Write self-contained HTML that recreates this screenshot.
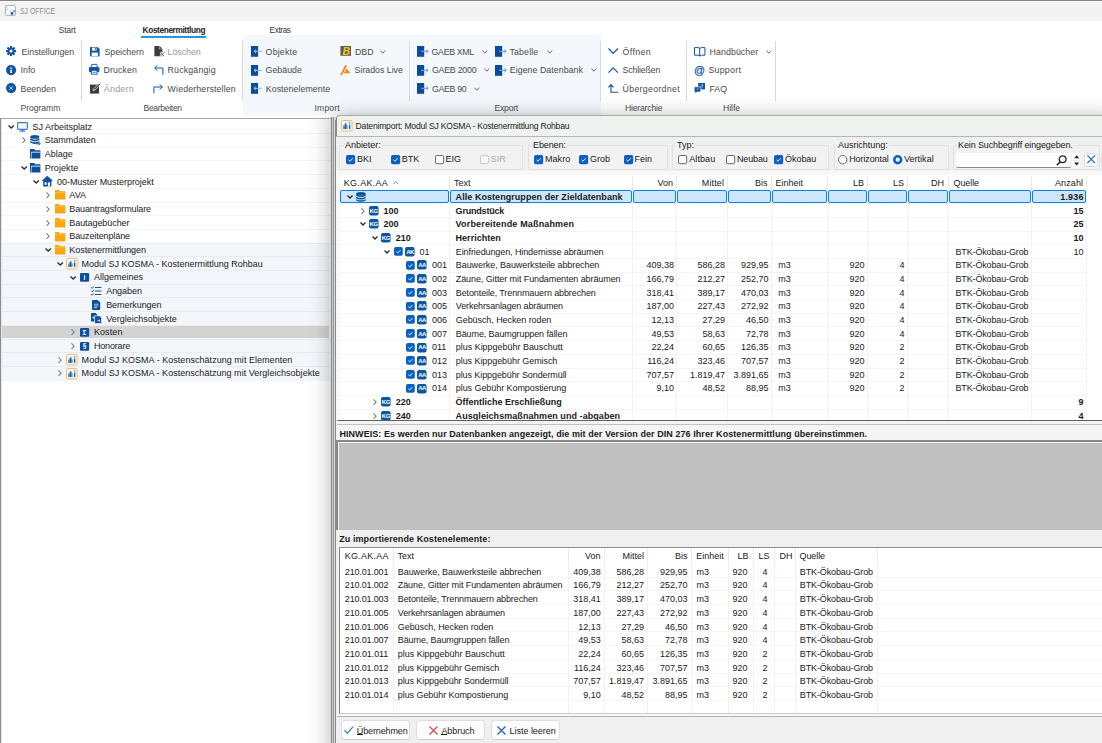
<!DOCTYPE html>
<html lang="de"><head><meta charset="utf-8"><title>SJ OFFICE</title>
<style>
html,body{margin:0;padding:0;background:#fff;}
body{width:1102px;height:743px;overflow:hidden;position:relative;font-family:"Liberation Sans",Arial,sans-serif;font-size:9px;color:#1a1a1a;}
#app{position:absolute;left:0;top:0;width:1102px;height:743px;overflow:hidden;}
#app div,#app span,#app svg{position:absolute;}
#app span{white-space:pre;line-height:12px;}
#app svg{overflow:visible;}
.rb{color:#4a4a4a;font-size:8.8px;}
.gl{color:#4c4c4c;font-size:8.6px;}
</style></head>
<body><div id="app">
<div style="left:0px;top:0px;width:1102px;height:20.8px;background:#f3f3f3;"></div>
<div style="left:0px;top:0px;width:1102px;height:1px;background:#868686;"></div>
<div style="left:0px;top:1px;width:1102px;height:1px;background:#f9f9f9;"></div>
<svg style="left:5px;top:5px;" width="11" height="11" viewBox="0 0 11 11"><rect x="0.5" y="0.5" width="10" height="10" rx="1.4" fill="#fff" stroke="#86b0e0" stroke-width="0.9"/><path d="M0.6 1 L1.6 2.4 L2.6 3.6" stroke="#f0b040" stroke-width="1" fill="none"/><rect x="0.2" y="0.2" width="1.6" height="1.4" fill="#f6c86a"/><rect x="5.9" y="7.2" width="2.4" height="2.4" fill="#174a9c"/><rect x="8.4" y="5.4" width="1.6" height="1.5" fill="#2f66b4"/><path d="M5 7 L6.4 5.6 L8 5.2 M5.4 9.8 L5.6 8" stroke="#f0b850" stroke-width="0.8" fill="none"/><path d="M0.8 5.2 L2.6 4.2" stroke="#86b0e0" stroke-width="0.7"/></svg>
<span id="t1" style="top:5.00px;left:19.8px;font-size:8.8px;color:#8b8b8b;transform:scaleX(0.78);transform-origin:0 50%;">SJ OFFICE</span>
<span id="t2" style="top:24.50px;left:58.8px;font-size:8.2px;color:#333;letter-spacing:-0.059px;">Start</span>
<span id="t3" style="top:24.00px;left:142.6px;font-size:8.3px;font-weight:bold;color:#222;letter-spacing:-0.387px;">Kostenermittlung</span>
<span id="t4" style="top:24.50px;left:269.6px;font-size:8.2px;color:#333;letter-spacing:-0.370px;">Extras</span>
<div style="left:141px;top:36px;width:65px;height:2px;background:#1b9ae0;"></div>
<div style="left:243px;top:35px;width:358px;height:81px;background:#f4f7fb;"></div>
<div style="left:81px;top:41px;width:1px;height:60px;background:#d9d9d9;"></div>
<div style="left:242px;top:41px;width:1px;height:60px;background:#d9d9d9;"></div>
<div style="left:409px;top:41px;width:1px;height:60px;background:#d9d9d9;"></div>
<div style="left:600px;top:41px;width:1px;height:60px;background:#d9d9d9;"></div>
<div style="left:686px;top:41px;width:1px;height:60px;background:#d9d9d9;"></div>
<div style="left:775px;top:41px;width:1px;height:60px;background:#d9d9d9;"></div>
<svg style="left:5.8px;top:46.2px;" width="10.1" height="10.1" viewBox="0 0 10.1 10.1"><g fill="#0f55a0"><rect x="3.95" y="0" width="2.2" height="10.1" rx="0.3" transform="rotate(0 5.05 5.05)"/><rect x="3.95" y="0" width="2.2" height="10.1" rx="0.3" transform="rotate(45 5.05 5.05)"/><rect x="3.95" y="0" width="2.2" height="10.1" rx="0.3" transform="rotate(90 5.05 5.05)"/><rect x="3.95" y="0" width="2.2" height="10.1" rx="0.3" transform="rotate(135 5.05 5.05)"/><circle cx="5.05" cy="5.05" r="3.35"/></g><circle cx="5.05" cy="5.05" r="1.55" fill="#fff"/></svg>
<span id="t5" class="rb" style="top:46.00px;left:21.5px;letter-spacing:-0.025px;">Einstellungen</span>
<svg style="left:5.7px;top:64.8px;" width="10.2" height="10.2" viewBox="0 0 10.2 10.2"><circle cx="5.1" cy="5.1" r="5.1" fill="#0f55a0"/><rect x="4.4" y="4.6" width="1.4" height="3.1" fill="#fff"/><rect x="4" y="7.3" width="2.2" height="0.7" fill="#fff"/><circle cx="5.1" cy="3.1" r="0.85" fill="#fff"/></svg>
<span id="t6" class="rb" style="top:64.00px;left:20.6px;">Info</span>
<svg style="left:5.7px;top:83.2px;" width="10.2" height="10.2" viewBox="0 0 10.2 10.2"><circle cx="5.1" cy="5.1" r="5.1" fill="#0f55a0"/><path d="M3.3 3.3 L6.9 6.9 M6.9 3.3 L3.3 6.9" stroke="#e8f0fa" stroke-width="0.75"/></svg>
<span id="t7" class="rb" style="top:83.00px;left:20.6px;letter-spacing:0.009px;">Beenden</span>
<span id="t8" class="gl" style="top:102.00px;left:20.6px;letter-spacing:-0.053px;">Programm</span>
<svg style="left:89.8px;top:46.6px;" width="9.6" height="9.4" viewBox="0 0 9.6 9.4"><path d="M0.8 0 H7.4 L9.6 2.1 V8.6 Q9.6 9.4 8.8 9.4 H0.8 Q0 9.4 0 8.6 V0.8 Q0 0 0.8 0 Z" fill="#0f55a0"/><rect x="2" y="0.6" width="4.6" height="3" fill="#fff"/><rect x="5.2" y="1" width="1" height="2" fill="#0f55a0"/><rect x="1.7" y="5.6" width="6.2" height="3.8" fill="#fff"/></svg>
<span id="t9" class="rb" style="top:46.00px;left:104.5px;letter-spacing:-0.036px;">Speichern</span>
<svg style="left:89.4px;top:64.3px;" width="10.4" height="10.6" viewBox="0 0 10.4 10.6"><rect x="2.3" y="0.4" width="5.8" height="3.2" rx="0.5" fill="#fff" stroke="#0f55a0" stroke-width="0.9"/><rect x="0" y="3" width="10.4" height="5.2" rx="1.3" fill="#0f55a0"/><rect x="2.4" y="6.3" width="5.6" height="3.9" fill="#fff" stroke="#0f55a0" stroke-width="0.9"/><rect x="3.6" y="7.8" width="3.2" height="0.8" fill="#0f55a0"/></svg>
<span id="t10" class="rb" style="top:64.00px;left:103.6px;letter-spacing:0.076px;">Drucken</span>
<svg style="left:89.6px;top:82.8px;" width="10.6" height="10.6" viewBox="0 0 10.6 10.6"><rect x="0" y="1.6" width="9" height="9" fill="#3c3c3c"/><path d="M3 7.6 L3.5 5.9 L9.2 0.3 L10.4 1.5 L4.8 7.1 Z" fill="#3c3c3c" stroke="#fff" stroke-width="0.7"/></svg>
<span id="t11" style="top:83.00px;left:103.8px;color:#9a9a9a;letter-spacing:0.178px;">Ändern</span>
<svg style="left:153.5px;top:46.1px;" width="10.6" height="10.6" viewBox="0 0 10.6 10.6"><path d="M0.4 0 H5.6 L8.4 2.8 V10.2 H0.4 Z" fill="#3c3c3c"/><path d="M5.4 0.2 V3 H8.2" fill="none" stroke="#fff" stroke-width="0.5"/><path d="M6.3 6.3 L10.2 10.3 M10.2 6.3 L6.3 10.3" stroke="#fff" stroke-width="2"/><path d="M6.4 6.4 L10.2 10.2 M10.2 6.4 L6.4 10.2" stroke="#3c3c3c" stroke-width="0.8"/></svg>
<span id="t12" style="top:46.00px;left:167.6px;color:#9a9a9a;letter-spacing:-0.133px;">Löschen</span>
<svg style="left:153.6px;top:65px;" width="9.6" height="10" viewBox="0 0 9.6 10"><path d="M3.4 0.4 L0.6 3 L3.4 5.6 M0.8 3 H8.9 V9.8" fill="none" stroke="#0f55a0" stroke-width="1"/></svg>
<span id="t13" class="rb" style="top:64.00px;left:167.6px;letter-spacing:0.163px;">Rückgängig</span>
<svg style="left:153.4px;top:84px;" width="10" height="9.4" viewBox="0 0 10 9.4"><path d="M6.6 0.4 L9.4 3 L6.6 5.6 M9.2 3 H0.9 V9.2" fill="none" stroke="#0f55a0" stroke-width="1"/></svg>
<span id="t14" class="rb" style="top:83.00px;left:167.6px;letter-spacing:0.143px;">Wiederherstellen</span>
<span id="t15" class="gl" style="top:102.00px;left:143.5px;letter-spacing:-0.328px;">Bearbeiten</span>
<svg style="left:251px;top:46.1px;" width="11" height="10.8" viewBox="0 0 11 10.8"><rect x="0" y="0" width="7.1" height="10.8" fill="#0a4b9b"/><path d="M7.1 5.3 H10.8" stroke="#6f9dd3" stroke-width="0.8"/><path d="M3.2 5.3 H7.1 M4.9 3.6 L3.1 5.3 L4.9 7" stroke="#dbe7f5" stroke-width="0.8" fill="none"/></svg>
<span id="t16" class="rb" style="top:46.00px;left:265.6px;letter-spacing:0.196px;">Objekte</span>
<svg style="left:251px;top:64.5px;" width="11" height="10.8" viewBox="0 0 11 10.8"><rect x="0" y="0" width="7.1" height="10.8" fill="#0a4b9b"/><path d="M7.1 5.3 H10.8" stroke="#6f9dd3" stroke-width="0.8"/><path d="M3.2 5.3 H7.1 M4.9 3.6 L3.1 5.3 L4.9 7" stroke="#dbe7f5" stroke-width="0.8" fill="none"/></svg>
<span id="t17" class="rb" style="top:64.00px;left:265.6px;letter-spacing:0.014px;">Gebäude</span>
<svg style="left:251px;top:83.2px;" width="11" height="10.8" viewBox="0 0 11 10.8"><rect x="0" y="0" width="7.1" height="10.8" fill="#0a4b9b"/><path d="M7.1 5.3 H10.8" stroke="#6f9dd3" stroke-width="0.8"/><path d="M3.2 5.3 H7.1 M4.9 3.6 L3.1 5.3 L4.9 7" stroke="#dbe7f5" stroke-width="0.8" fill="none"/></svg>
<span id="t18" class="rb" style="top:83.00px;left:265.8px;letter-spacing:0.052px;">Kostenelemente</span>
<svg style="left:339.8px;top:46.2px;" width="11.4" height="10.4" viewBox="0 0 11.4 10.4"><rect x="0.4" y="0" width="10.6" height="9.8" fill="#5b5b5b"/></svg>
<span id="t19" style="top:45.00px;left:246.2px;width:200px;text-align:center;font-size:10.5px;font-weight:bold;color:#f7c815;font-style:italic;">B</span>
<span id="t20" class="rb" style="top:46.00px;left:355px;">DBD</span>
<svg style="left:380.3px;top:50.0px;" width="5.5" height="4" viewBox="0 0 5.5 4"><path d="M0.4 0.6 L2.75 3.2 L5.1 0.6" fill="none" stroke="#555" stroke-width="0.9"/></svg>
<svg style="left:340px;top:64.8px;" width="10.6" height="10" viewBox="0 0 10.6 10"><path d="M5.2 0 L7.2 0.8 L2 10 H0 Z" fill="#f28a1c"/><path d="M6.8 3.4 L10.5 8.2 H3.6 Z" fill="#f28a1c"/></svg>
<span id="t21" class="rb" style="top:64.00px;left:354.6px;letter-spacing:-0.010px;">Sirados Live</span>
<span id="t22" class="gl" style="top:102.00px;left:314.6px;letter-spacing:0.123px;">Import</span>
<svg style="left:417px;top:46.1px;" width="12" height="10.8" viewBox="0 0 12 10.8"><rect x="0" y="0" width="7.2" height="10.8" fill="#0a4b9b"/><path d="M7.2 5.3 H11 M9.4 3.6 L11.2 5.3 L9.4 7" stroke="#3f7cc6" stroke-width="0.8" fill="none"/><path d="M4 5.3 H7.2" stroke="#a9c4e6" stroke-width="0.8"/></svg>
<span id="t23" class="rb" style="top:46.00px;left:431.6px;letter-spacing:-0.336px;">GAEB XML</span>
<svg style="left:481.7px;top:50.0px;" width="5.5" height="4" viewBox="0 0 5.5 4"><path d="M0.4 0.6 L2.75 3.2 L5.1 0.6" fill="none" stroke="#555" stroke-width="0.9"/></svg>
<svg style="left:417px;top:64.5px;" width="12" height="10.8" viewBox="0 0 12 10.8"><rect x="0" y="0" width="7.2" height="10.8" fill="#0a4b9b"/><path d="M7.2 5.3 H11 M9.4 3.6 L11.2 5.3 L9.4 7" stroke="#3f7cc6" stroke-width="0.8" fill="none"/><path d="M4 5.3 H7.2" stroke="#a9c4e6" stroke-width="0.8"/></svg>
<span id="t24" class="rb" style="top:64.00px;left:432px;letter-spacing:-0.241px;">GAEB 2000</span>
<svg style="left:484.1px;top:68.4px;" width="5.5" height="4" viewBox="0 0 5.5 4"><path d="M0.4 0.6 L2.75 3.2 L5.1 0.6" fill="none" stroke="#555" stroke-width="0.9"/></svg>
<svg style="left:417px;top:83.2px;" width="12" height="10.8" viewBox="0 0 12 10.8"><rect x="0" y="0" width="7.2" height="10.8" fill="#0a4b9b"/><path d="M7.2 5.3 H11 M9.4 3.6 L11.2 5.3 L9.4 7" stroke="#3f7cc6" stroke-width="0.8" fill="none"/><path d="M4 5.3 H7.2" stroke="#a9c4e6" stroke-width="0.8"/></svg>
<span id="t25" class="rb" style="top:83.00px;left:432px;letter-spacing:-0.341px;">GAEB 90</span>
<svg style="left:474.1px;top:87.10000000000001px;" width="5.5" height="4" viewBox="0 0 5.5 4"><path d="M0.4 0.6 L2.75 3.2 L5.1 0.6" fill="none" stroke="#555" stroke-width="0.9"/></svg>
<svg style="left:495px;top:46.1px;" width="12" height="10.8" viewBox="0 0 12 10.8"><rect x="0" y="0" width="7.2" height="10.8" fill="#0a4b9b"/><path d="M7.2 5.3 H11 M9.4 3.6 L11.2 5.3 L9.4 7" stroke="#3f7cc6" stroke-width="0.8" fill="none"/><path d="M4 5.3 H7.2" stroke="#a9c4e6" stroke-width="0.8"/></svg>
<span id="t26" class="rb" style="top:46.00px;left:509.6px;letter-spacing:0.116px;">Tabelle</span>
<svg style="left:546.7px;top:50.0px;" width="5.5" height="4" viewBox="0 0 5.5 4"><path d="M0.4 0.6 L2.75 3.2 L5.1 0.6" fill="none" stroke="#555" stroke-width="0.9"/></svg>
<svg style="left:495px;top:64.5px;" width="12" height="10.8" viewBox="0 0 12 10.8"><rect x="0" y="0" width="7.2" height="10.8" fill="#0a4b9b"/><path d="M7.2 5.3 H11 M9.4 3.6 L11.2 5.3 L9.4 7" stroke="#3f7cc6" stroke-width="0.8" fill="none"/><path d="M4 5.3 H7.2" stroke="#a9c4e6" stroke-width="0.8"/></svg>
<span id="t27" class="rb" style="top:64.00px;left:509.8px;letter-spacing:0.044px;">Eigene Datenbank</span>
<svg style="left:591.3px;top:68.4px;" width="5.5" height="4" viewBox="0 0 5.5 4"><path d="M0.4 0.6 L2.75 3.2 L5.1 0.6" fill="none" stroke="#555" stroke-width="0.9"/></svg>
<span id="t28" class="gl" style="top:102.00px;left:494.6px;letter-spacing:-0.257px;">Export</span>
<svg style="left:608.2px;top:48.4px;" width="10.4" height="6.2" viewBox="0 0 10.4 6.2"><path d="M0.5 0.5 L5.2 5.4 L9.9 0.5" fill="none" stroke="#0f55a0" stroke-width="1.2"/></svg>
<span id="t29" class="rb" style="top:46.00px;left:622.6px;letter-spacing:0.342px;">Öffnen</span>
<svg style="left:608.2px;top:66.9px;" width="10.4" height="6.2" viewBox="0 0 10.4 6.2"><path d="M0.5 5.7 L5.2 0.8 L9.9 5.7" fill="none" stroke="#0f55a0" stroke-width="1.2"/></svg>
<span id="t30" class="rb" style="top:64.00px;left:622.6px;letter-spacing:-0.158px;">Schließen</span>
<svg style="left:608px;top:83.9px;" width="10.4" height="9" viewBox="0 0 10.4 9"><path d="M0.5 3.3 L3 0.7 L5.5 3.3 M3 0.8 V8.3 H10.2" fill="none" stroke="#0f55a0" stroke-width="1.15"/></svg>
<span id="t31" class="rb" style="top:83.00px;left:622.6px;letter-spacing:0.292px;">Übergeordnet</span>
<span id="t32" class="gl" style="top:102.00px;left:625px;letter-spacing:-0.187px;">Hierarchie</span>
<svg style="left:694px;top:47px;" width="11.4" height="9.6" viewBox="0 0 11.4 9.6"><path d="M0.5 0.6 H4 Q5.7 0.6 5.7 2 Q5.7 0.6 7.4 0.6 H10.9 V8.2 H7.4 Q5.7 8.2 5.7 9.3 Q5.7 8.2 4 8.2 H0.5 Z M5.7 2 V9" fill="none" stroke="#0f55a0" stroke-width="1"/></svg>
<span id="t33" class="rb" style="top:46.00px;left:709.6px;letter-spacing:0.076px;">Handbücher</span>
<svg style="left:766.1px;top:50.0px;" width="5.5" height="4" viewBox="0 0 5.5 4"><path d="M0.4 0.6 L2.75 3.2 L5.1 0.6" fill="none" stroke="#555" stroke-width="0.9"/></svg>
<span id="t34" style="top:64.00px;left:599.5px;width:200px;text-align:center;font-size:10.8px;color:#0f55a0;-webkit-text-stroke:0.25px #0f55a0;">@</span>
<span id="t35" class="rb" style="top:64.00px;left:708.4px;letter-spacing:0.270px;">Support</span>
<svg style="left:694.2px;top:83.1px;" width="11.4" height="10.8" viewBox="0 0 11.4 10.8"><path d="M4.2 0 H11 V6.4 H4.2 Z" fill="#0f55a0"/><path d="M0.2 3.8 H6.8 V9 H3 L1.2 10.8 V9 H0.2 Z" fill="#0f55a0" stroke="#fff" stroke-width="0.6"/><rect x="7.7" y="1.1" width="1" height="1.7" fill="#fff"/><rect x="7.7" y="3.4" width="1" height="0.9" fill="#fff"/><rect x="2.8" y="5.6" width="1.6" height="1" fill="#fff" opacity="0.7"/></svg>
<span id="t36" class="rb" style="top:83.00px;left:709.4px;">FAQ</span>
<span id="t37" class="gl" style="top:102.00px;left:723px;letter-spacing:-0.021px;">Hilfe</span>
<div style="left:0px;top:118px;width:331px;height:1px;background:#a6a6a6;"></div>
<div style="left:0px;top:118px;width:1px;height:625px;background:#8f8f8f;"></div>
<div style="left:1px;top:119px;width:1px;height:624px;background:#e3e3e3;"></div>
<div style="left:2px;top:243.14999999999998px;width:328px;height:137.0px;background:#f3f6fa;"></div>
<div style="left:2px;top:325.95000000000005px;width:326.5px;height:12.5px;background:#d3d3d3;"></div>
<div style="left:2px;top:133.05px;width:328px;height:1px;background:rgba(120,130,140,0.085);"></div>
<div style="left:2px;top:146.75px;width:328px;height:1px;background:rgba(120,130,140,0.085);"></div>
<div style="left:2px;top:160.45px;width:328px;height:1px;background:rgba(120,130,140,0.085);"></div>
<div style="left:2px;top:174.15px;width:328px;height:1px;background:rgba(120,130,140,0.085);"></div>
<div style="left:2px;top:187.85px;width:328px;height:1px;background:rgba(120,130,140,0.085);"></div>
<div style="left:2px;top:201.55px;width:328px;height:1px;background:rgba(120,130,140,0.085);"></div>
<div style="left:2px;top:215.25px;width:328px;height:1px;background:rgba(120,130,140,0.085);"></div>
<div style="left:2px;top:228.95px;width:328px;height:1px;background:rgba(120,130,140,0.085);"></div>
<div style="left:2px;top:242.65px;width:328px;height:1px;background:rgba(120,130,140,0.085);"></div>
<div style="left:2px;top:256.35px;width:328px;height:1px;background:rgba(120,130,140,0.085);"></div>
<div style="left:2px;top:270.05px;width:328px;height:1px;background:rgba(120,130,140,0.085);"></div>
<div style="left:2px;top:283.75px;width:328px;height:1px;background:rgba(120,130,140,0.085);"></div>
<div style="left:2px;top:297.45px;width:328px;height:1px;background:rgba(120,130,140,0.085);"></div>
<div style="left:2px;top:311.15px;width:328px;height:1px;background:rgba(120,130,140,0.085);"></div>
<div style="left:2px;top:324.85px;width:328px;height:1px;background:rgba(120,130,140,0.085);"></div>
<div style="left:2px;top:338.55px;width:328px;height:1px;background:rgba(120,130,140,0.085);"></div>
<div style="left:2px;top:352.25px;width:328px;height:1px;background:rgba(120,130,140,0.085);"></div>
<div style="left:2px;top:365.95px;width:328px;height:1px;background:rgba(120,130,140,0.085);"></div>
<div style="left:2px;top:379.65px;width:328px;height:1px;background:rgba(120,130,140,0.085);"></div>
<svg style="left:8.200000000000001px;top:124.89999999999999px;" width="6.4" height="4" viewBox="0 0 6.4 4"><path d="M0.5 0.5 L3.2 3.1 L5.9 0.5" fill="none" stroke="#2e2e2e" stroke-width="1.35"/></svg>
<svg style="left:17.200000000000003px;top:121.69999999999999px;" width="11" height="10" viewBox="0 0 11 10"><rect x="0.6" y="0.6" width="9.8" height="6.8" rx="0.9" fill="#f3f8ff" stroke="#3a78cc" stroke-width="1.1"/><rect x="4.2" y="7.6" width="2.6" height="1.1" fill="#3a78cc"/><rect x="2.6" y="8.6" width="5.8" height="1.1" fill="#3a78cc"/></svg>
<span id="t38" style="top:121.00px;left:32.4px;letter-spacing:0.011px;">SJ Arbeitsplatz</span>
<svg style="left:21.500000000000004px;top:137.39999999999998px;" width="4" height="6.4" viewBox="0 0 4 6.4"><path d="M0.5 0.4 L3.1 3.2 L0.5 6" fill="none" stroke="#7a7a7a" stroke-width="1.05"/></svg>
<svg style="left:29.900000000000002px;top:135.2px;" width="10" height="10.4" viewBox="0 0 10 10.4"><g fill="#0c4f9b"><ellipse cx="4.8" cy="1.9" rx="4.6" ry="1.9"/><path d="M0.2 3.3 Q4.8 6.2 9.4 3.3 V5 Q4.8 7.9 0.2 5 Z"/><path d="M0.2 5.9 Q4.8 8.8 9.4 5.9 V7.6 Q4.8 10.5 0.2 7.6 Z"/></g></svg>
<svg style="left:35.900000000000006px;top:142.2px;" width="4.4" height="3.6" viewBox="0 0 4.4 3.6"><path d="M0 1.8 H4.2 M2.6 0.2 L4.2 1.8 L2.6 3.4" stroke="#0c4f9b" stroke-width="0.9" fill="none"/></svg>
<span id="t39" style="top:134.00px;left:44.7px;letter-spacing:0.017px;">Stammdaten</span>
<svg style="left:29.900000000000002px;top:149.4px;" width="10.4" height="9.4" viewBox="0 0 10.4 9.4"><path d="M0 0 H4.2 L5.2 1.3 H10.4 V9.4 H0 Z" fill="#0c4f9b"/><path d="M1.2 3.2 H10.4" stroke="#fff" stroke-width="0.8"/><path d="M1.4 3.2 V9.4" stroke="#fff" stroke-width="0.6"/></svg>
<span id="t40" style="top:148.00px;left:44.7px;letter-spacing:0.028px;">Ablage</span>
<svg style="left:20.500000000000004px;top:165.99999999999997px;" width="6.4" height="4" viewBox="0 0 6.4 4"><path d="M0.5 0.5 L3.2 3.1 L5.9 0.5" fill="none" stroke="#2e2e2e" stroke-width="1.35"/></svg>
<svg style="left:29.900000000000002px;top:163.1px;" width="10.4" height="9.4" viewBox="0 0 10.4 9.4"><path d="M0 0 H4.2 L5.2 1.3 H10.4 V9.4 H0 Z" fill="#0c4f9b"/><path d="M1.2 3.2 H10.4" stroke="#fff" stroke-width="0.8"/><path d="M1.4 3.2 V9.4" stroke="#fff" stroke-width="0.6"/></svg>
<span id="t41" style="top:162.00px;left:44.7px;letter-spacing:0.084px;">Projekte</span>
<svg style="left:32.8px;top:179.69999999999996px;" width="6.4" height="4" viewBox="0 0 6.4 4"><path d="M0.5 0.5 L3.2 3.1 L5.9 0.5" fill="none" stroke="#2e2e2e" stroke-width="1.35"/></svg>
<svg style="left:42.0px;top:176.29999999999998px;" width="10.6" height="10.4" viewBox="0 0 10.6 10.4"><path d="M5.3 0 L10.6 4.6 H9.4 V10.4 H1.2 V4.6 H0 Z" fill="#0c4f9b"/><path d="M0.2 4.9 L5.3 0.6 L10.4 4.9" stroke="#fff" stroke-width="0.7" fill="none"/><path d="M5.3 0 L10.6 4.4 L9.9 5.2 L5.3 1.3 L0.7 5.2 L0 4.4 Z" fill="#0c4f9b"/><rect x="2.6" y="6.4" width="2.1" height="2.4" fill="#fff"/><rect x="5.9" y="6.4" width="2.1" height="4" fill="#fff"/></svg>
<span id="t42" style="top:176.00px;left:57.0px;letter-spacing:-0.037px;">00-Muster Musterprojekt</span>
<svg style="left:46.1px;top:192.2px;" width="4" height="6.4" viewBox="0 0 4 6.4"><path d="M0.5 0.4 L3.1 3.2 L0.5 6" fill="none" stroke="#7a7a7a" stroke-width="1.05"/></svg>
<svg style="left:54.50000000000001px;top:190.4px;" width="10.4" height="9.6" viewBox="0 0 10.4 9.6"><path d="M0 0.6 Q0 0 0.6 0 H4 L5 1.2 H9.8 Q10.4 1.2 10.4 1.8 V9 Q10.4 9.6 9.8 9.6 H0.6 Q0 9.6 0 9 Z" fill="#f9a70d"/><path d="M0 2.6 H10.4" stroke="#fdc75a" stroke-width="0.7"/></svg>
<span id="t43" style="top:189.00px;left:69.30000000000001px;">AVA</span>
<svg style="left:46.1px;top:205.89999999999998px;" width="4" height="6.4" viewBox="0 0 4 6.4"><path d="M0.5 0.4 L3.1 3.2 L0.5 6" fill="none" stroke="#7a7a7a" stroke-width="1.05"/></svg>
<svg style="left:54.50000000000001px;top:204.1px;" width="10.4" height="9.6" viewBox="0 0 10.4 9.6"><path d="M0 0.6 Q0 0 0.6 0 H4 L5 1.2 H9.8 Q10.4 1.2 10.4 1.8 V9 Q10.4 9.6 9.8 9.6 H0.6 Q0 9.6 0 9 Z" fill="#f9a70d"/><path d="M0 2.6 H10.4" stroke="#fdc75a" stroke-width="0.7"/></svg>
<span id="t44" style="top:203.00px;left:69.30000000000001px;letter-spacing:-0.124px;">Bauantragsformulare</span>
<svg style="left:46.1px;top:219.6px;" width="4" height="6.4" viewBox="0 0 4 6.4"><path d="M0.5 0.4 L3.1 3.2 L0.5 6" fill="none" stroke="#7a7a7a" stroke-width="1.05"/></svg>
<svg style="left:54.50000000000001px;top:217.8px;" width="10.4" height="9.6" viewBox="0 0 10.4 9.6"><path d="M0 0.6 Q0 0 0.6 0 H4 L5 1.2 H9.8 Q10.4 1.2 10.4 1.8 V9 Q10.4 9.6 9.8 9.6 H0.6 Q0 9.6 0 9 Z" fill="#f9a70d"/><path d="M0 2.6 H10.4" stroke="#fdc75a" stroke-width="0.7"/></svg>
<span id="t45" style="top:217.00px;left:69.30000000000001px;letter-spacing:-0.066px;">Bautagebücher</span>
<svg style="left:46.1px;top:233.29999999999998px;" width="4" height="6.4" viewBox="0 0 4 6.4"><path d="M0.5 0.4 L3.1 3.2 L0.5 6" fill="none" stroke="#7a7a7a" stroke-width="1.05"/></svg>
<svg style="left:54.50000000000001px;top:231.5px;" width="10.4" height="9.6" viewBox="0 0 10.4 9.6"><path d="M0 0.6 Q0 0 0.6 0 H4 L5 1.2 H9.8 Q10.4 1.2 10.4 1.8 V9 Q10.4 9.6 9.8 9.6 H0.6 Q0 9.6 0 9 Z" fill="#f9a70d"/><path d="M0 2.6 H10.4" stroke="#fdc75a" stroke-width="0.7"/></svg>
<span id="t46" style="top:230.00px;left:69.30000000000001px;letter-spacing:-0.097px;">Bauzeitenpläne</span>
<svg style="left:45.1px;top:248.19999999999996px;" width="6.4" height="4" viewBox="0 0 6.4 4"><path d="M0.5 0.5 L3.2 3.1 L5.9 0.5" fill="none" stroke="#2e2e2e" stroke-width="1.35"/></svg>
<svg style="left:54.50000000000001px;top:245.2px;" width="10.4" height="9.6" viewBox="0 0 10.4 9.6"><path d="M0 0.6 Q0 0 0.6 0 H4 L5 1.2 H9.8 Q10.4 1.2 10.4 1.8 V9 Q10.4 9.6 9.8 9.6 H0.6 Q0 9.6 0 9 Z" fill="#f9a70d"/><path d="M0 2.6 H10.4" stroke="#fdc75a" stroke-width="0.7"/></svg>
<span id="t47" style="top:244.00px;left:69.30000000000001px;letter-spacing:-0.047px;">Kostenermittlungen</span>
<svg style="left:57.4px;top:261.90000000000003px;" width="6.4" height="4" viewBox="0 0 6.4 4"><path d="M0.5 0.5 L3.2 3.1 L5.9 0.5" fill="none" stroke="#2e2e2e" stroke-width="1.35"/></svg>
<svg style="left:65.9px;top:258.1000000000001px;" width="11.6" height="11.4" viewBox="0 0 11.6 11.4"><rect x="0.5" y="0.5" width="10.6" height="10.4" rx="1.2" fill="#f8fafc" stroke="#f3bb6a" stroke-width="1"/><g fill="#1a5fb0"><rect x="2.3" y="5.4" width="1.3" height="3.6"/><rect x="3.7" y="3.4" width="1.8" height="5.6"/><rect x="5.5" y="5.4" width="1.1" height="3.6" opacity="0.75"/><rect x="8" y="4.7" width="1.3" height="4.3"/><rect x="8" y="2.4" width="1.3" height="1.2"/></g></svg>
<span id="t48" style="top:258.00px;left:81.6px;letter-spacing:-0.010px;">Modul SJ KOSMA - Kostenermittlung Rohbau</span>
<svg style="left:69.7px;top:275.59999999999997px;" width="6.4" height="4" viewBox="0 0 6.4 4"><path d="M0.5 0.5 L3.2 3.1 L5.9 0.5" fill="none" stroke="#2e2e2e" stroke-width="1.35"/></svg>
<svg style="left:79.89999999999999px;top:273.05px;" width="9.2" height="8.8" viewBox="0 0 9.2 8.8"><rect x="0" y="0" width="9.2" height="8.8" rx="1.2" fill="#0c4f9b"/></svg>
<span id="t49" style="top:271.50px;left:-15.500000000000014px;width:200px;text-align:center;font-size:6.6px;font-weight:bold;color:#fff;">i</span>
<span id="t50" style="top:271.00px;left:93.9px;letter-spacing:0.015px;">Allgemeines</span>
<svg style="left:91.4px;top:286.1px;" width="10.4" height="10" viewBox="0 0 10.4 10"><g stroke="#0c4f9b" fill="none" stroke-width="1.1"><path d="M4 1.5 H10.4 M4 5 H10.4 M4 8.5 H10.4"/><path d="M0.2 1.3 L1.2 2.3 L2.9 0.4 M0.2 4.8 L1.2 5.8 L2.9 3.9 M0.2 8.3 L1.2 9.3 L2.9 7.4" stroke-width="1"/></g></svg>
<span id="t51" style="top:285.00px;left:106.20000000000002px;letter-spacing:-0.050px;">Angaben</span>
<svg style="left:92.0px;top:299.90000000000003px;" width="8.2" height="10" viewBox="0 0 8.2 10"><path d="M0.8 0 H5.6 L8.2 2.6 V9.2 Q8.2 10 7.4 10 H0.8 Q0 10 0 9.2 V0.8 Q0 0 0.8 0 Z" fill="#0c4f9b"/><path d="M1.8 4.2 H6.4 M1.8 5.9 H6.4 M1.8 7.6 H5" stroke="#cfe0f5" stroke-width="0.8"/></svg>
<span id="t52" style="top:299.00px;left:106.20000000000002px;letter-spacing:-0.077px;">Bemerkungen</span>
<svg style="left:91.4px;top:313.3px;" width="10.8" height="10.8" viewBox="0 0 10.8 10.8"><path d="M0 0 H4.6 L6.4 1.8 V8.4 H0 Z" fill="#0c4f9b"/><path d="M3.6 2.8 H8.6 L10.6 4.8 V10.6 H3.6 Z" fill="#0c4f9b" stroke="#f3f6fa" stroke-width="0.7"/><path d="M1.4 4.6 H3.4 M2.4 3.6 V5.6" stroke="#fff" stroke-width="0.7"/><path d="M6.4 7.6 H9 M7.8 6.4 L9.1 7.6 L7.8 8.8" stroke="#fff" stroke-width="0.7" fill="none"/></svg>
<span id="t53" style="top:313.00px;left:106.20000000000002px;letter-spacing:0.009px;">Vergleichsobjekte</span>
<svg style="left:70.7px;top:329.20000000000005px;" width="4" height="6.4" viewBox="0 0 4 6.4"><path d="M0.5 0.4 L3.1 3.2 L0.5 6" fill="none" stroke="#7a7a7a" stroke-width="1.05"/></svg>
<svg style="left:79.89999999999999px;top:327.8500000000001px;" width="9.2" height="8.8" viewBox="0 0 9.2 8.8"><rect x="0" y="0" width="9.2" height="8.8" rx="1.2" fill="#0c4f9b"/></svg>
<span id="t54" style="top:326.50px;left:-15.500000000000014px;width:200px;text-align:center;font-size:6.6px;font-weight:bold;color:#fff;">Σ</span>
<span id="t55" style="top:326.00px;left:93.9px;letter-spacing:0.111px;">Kosten</span>
<svg style="left:70.7px;top:342.9px;" width="4" height="6.4" viewBox="0 0 4 6.4"><path d="M0.5 0.4 L3.1 3.2 L0.5 6" fill="none" stroke="#7a7a7a" stroke-width="1.05"/></svg>
<svg style="left:79.89999999999999px;top:341.55px;" width="9.2" height="8.8" viewBox="0 0 9.2 8.8"><rect x="0" y="0" width="9.2" height="8.8" rx="1.2" fill="#0c4f9b"/></svg>
<span id="t56" style="top:339.50px;left:-15.500000000000014px;width:200px;text-align:center;font-size:6.6px;font-weight:bold;color:#fff;">§</span>
<span id="t57" style="top:340.00px;left:93.9px;letter-spacing:-0.166px;">Honorare</span>
<svg style="left:58.4px;top:356.6px;" width="4" height="6.4" viewBox="0 0 4 6.4"><path d="M0.5 0.4 L3.1 3.2 L0.5 6" fill="none" stroke="#7a7a7a" stroke-width="1.05"/></svg>
<svg style="left:65.9px;top:354.00000000000006px;" width="11.6" height="11.4" viewBox="0 0 11.6 11.4"><rect x="0.5" y="0.5" width="10.6" height="10.4" rx="1.2" fill="#f8fafc" stroke="#f3bb6a" stroke-width="1"/><g fill="#1a5fb0"><rect x="2.3" y="5.4" width="1.3" height="3.6"/><rect x="3.7" y="3.4" width="1.8" height="5.6"/><rect x="5.5" y="5.4" width="1.1" height="3.6" opacity="0.75"/><rect x="8" y="4.7" width="1.3" height="4.3"/><rect x="8" y="2.4" width="1.3" height="1.2"/></g></svg>
<span id="t58" style="top:354.00px;left:81.6px;letter-spacing:0.035px;">Modul SJ KOSMA - Kostenschätzung mit Elementen</span>
<svg style="left:58.4px;top:370.3px;" width="4" height="6.4" viewBox="0 0 4 6.4"><path d="M0.5 0.4 L3.1 3.2 L0.5 6" fill="none" stroke="#7a7a7a" stroke-width="1.05"/></svg>
<svg style="left:65.9px;top:367.70000000000005px;" width="11.6" height="11.4" viewBox="0 0 11.6 11.4"><rect x="0.5" y="0.5" width="10.6" height="10.4" rx="1.2" fill="#f8fafc" stroke="#f3bb6a" stroke-width="1"/><g fill="#1a5fb0"><rect x="2.3" y="5.4" width="1.3" height="3.6"/><rect x="3.7" y="3.4" width="1.8" height="5.6"/><rect x="5.5" y="5.4" width="1.1" height="3.6" opacity="0.75"/><rect x="8" y="4.7" width="1.3" height="4.3"/><rect x="8" y="2.4" width="1.3" height="1.2"/></g></svg>
<span id="t59" style="top:367.00px;left:81.6px;letter-spacing:0.029px;">Modul SJ KOSMA - Kostenschätzung mit Vergleichsobjekte</span>
<div style="left:335.5px;top:114.9px;width:780px;height:640px;background:#f0f0f0;border-radius:5px 0 0 0;box-shadow:0 0 20px rgba(0,0,0,0.22),0 0 6px rgba(0,0,0,0.07);"></div>
<div style="left:306px;top:119px;width:25px;height:624px;background:linear-gradient(to right,rgba(0,0,0,0) 0%,rgba(0,0,0,0.025) 45%,rgba(0,0,0,0.09) 100%);"></div>
<div style="left:331px;top:117px;width:5px;height:626px;background:#d0d0d0;"></div>
<div style="left:331px;top:117px;width:1px;height:626px;background:#85888c;"></div>
<div style="left:332px;top:117px;width:1px;height:626px;background:#c6c6c6;"></div>
<div style="left:333px;top:117px;width:1px;height:626px;background:#999;"></div>
<div style="left:334px;top:117px;width:1px;height:626px;background:#d6d6d6;"></div>
<div style="left:335px;top:120px;width:1px;height:623px;background:#8a8a8a;"></div>
<div style="left:335.5px;top:114.9px;width:767px;height:21.6px;background:#eff3ef;border-radius:4px 0 0 0;border-top:1px solid #ababab;border-left:1px solid #8a8a8a;box-sizing:border-box;"></div>
<div style="left:336px;top:136px;width:766px;height:1px;background:#b6b6b6;"></div>
<svg style="left:340.8px;top:119.6px;" width="11.6" height="11.4" viewBox="0 0 11.6 11.4"><rect x="0.5" y="0.5" width="10.6" height="10.4" rx="1.2" fill="#f8fafc" stroke="#f3bb6a" stroke-width="1"/><g fill="#1a5fb0"><rect x="2.3" y="5.4" width="1.3" height="3.6"/><rect x="3.7" y="3.4" width="1.8" height="5.6"/><rect x="5.5" y="5.4" width="1.1" height="3.6" opacity="0.75"/><rect x="8" y="4.7" width="1.3" height="4.3"/><rect x="8" y="2.4" width="1.3" height="1.2"/></g></svg>
<span id="t60" style="top:120.00px;left:355.6px;font-size:8.6px;color:#222;letter-spacing:-0.213px;">Datenimport: Modul SJ KOSMA - Kostenermittlung Rohbau</span>
<div style="left:339px;top:145.4px;width:184px;height:24.2px;border:1px solid #e0e0e0;border-radius:2px;box-sizing:border-box;background:#f2f2f2;"></div>
<div style="left:343.5px;top:141px;width:38px;height:8px;background:#f0f0f0;"></div>
<span id="t61" style="top:139.00px;left:345px;letter-spacing:-0.037px;">Anbieter:</span>
<div style="left:527.5px;top:145.4px;width:140.0px;height:24.2px;border:1px solid #e0e0e0;border-radius:2px;box-sizing:border-box;background:#f2f2f2;"></div>
<div style="left:531.5px;top:141px;width:35px;height:8px;background:#f0f0f0;"></div>
<span id="t62" style="top:139.00px;left:533px;letter-spacing:-0.119px;">Ebenen:</span>
<div style="left:671.8px;top:145.4px;width:157.0px;height:24.2px;border:1px solid #e0e0e0;border-radius:2px;box-sizing:border-box;background:#f2f2f2;"></div>
<div style="left:675.5px;top:141px;width:19px;height:8px;background:#f0f0f0;"></div>
<span id="t63" style="top:139.00px;left:677px;">Typ:</span>
<div style="left:833.5px;top:145.4px;width:115.0px;height:24.2px;border:1px solid #e0e0e0;border-radius:2px;box-sizing:border-box;background:#f2f2f2;"></div>
<div style="left:836.5px;top:141px;width:52px;height:8px;background:#f0f0f0;"></div>
<span id="t64" style="top:139.00px;left:838px;letter-spacing:-0.028px;">Ausrichtung:</span>
<div style="left:952.8px;top:145.4px;width:147.20000000000005px;height:24.2px;border:1px solid #e0e0e0;border-radius:2px;box-sizing:border-box;background:#f2f2f2;"></div>
<div style="left:956.5px;top:141px;width:117px;height:8px;background:#f0f0f0;"></div>
<span id="t65" style="top:139.00px;left:958px;letter-spacing:-0.116px;">Kein Suchbegriff eingegeben.</span>
<svg style="left:346px;top:154.70000000000002px;" width="9.2" height="9.2" viewBox="0 0 9.2 9.2"><rect x="0" y="0" width="9.2" height="9.2" rx="1.8" fill="#0b60c4"/><path d="M2.48 4.88 L3.96 6.26 L6.72 3.31" fill="none" stroke="#fff" stroke-width="0.9"/></svg>
<span id="t66" style="top:153.00px;left:357px;">BKI</span>
<svg style="left:390.8px;top:154.70000000000002px;" width="9.2" height="9.2" viewBox="0 0 9.2 9.2"><rect x="0" y="0" width="9.2" height="9.2" rx="1.8" fill="#0b60c4"/><path d="M2.48 4.88 L3.96 6.26 L6.72 3.31" fill="none" stroke="#fff" stroke-width="0.9"/></svg>
<span id="t67" style="top:153.00px;left:401.8px;">BTK</span>
<svg style="left:435px;top:154.70000000000002px;" width="9.2" height="9.2" viewBox="0 0 9.2 9.2"><rect x="0.5" y="0.5" width="8.2" height="8.2" rx="1.6" fill="#fff" stroke="#5a5a5a" stroke-width="0.9"/></svg>
<span id="t68" style="top:153.00px;left:445.6px;">EIG</span>
<svg style="left:479.6px;top:154.70000000000002px;" width="9.2" height="9.2" viewBox="0 0 9.2 9.2"><rect x="0.5" y="0.5" width="8.2" height="8.2" rx="1.6" fill="#f6f6f6" stroke="#c4c4c4" stroke-width="0.9"/></svg>
<span id="t69" style="top:153.00px;left:490.8px;color:#a8a8a8;">SIR</span>
<svg style="left:534.2px;top:154.70000000000002px;" width="9.2" height="9.2" viewBox="0 0 9.2 9.2"><rect x="0" y="0" width="9.2" height="9.2" rx="1.8" fill="#0b60c4"/><path d="M2.48 4.88 L3.96 6.26 L6.72 3.31" fill="none" stroke="#fff" stroke-width="0.9"/></svg>
<span id="t70" style="top:153.00px;left:545px;letter-spacing:0.057px;">Makro</span>
<svg style="left:579.4px;top:154.70000000000002px;" width="9.2" height="9.2" viewBox="0 0 9.2 9.2"><rect x="0" y="0" width="9.2" height="9.2" rx="1.8" fill="#0b60c4"/><path d="M2.48 4.88 L3.96 6.26 L6.72 3.31" fill="none" stroke="#fff" stroke-width="0.9"/></svg>
<span id="t71" style="top:153.00px;left:590px;">Grob</span>
<svg style="left:623.8px;top:154.70000000000002px;" width="9.2" height="9.2" viewBox="0 0 9.2 9.2"><rect x="0" y="0" width="9.2" height="9.2" rx="1.8" fill="#0b60c4"/><path d="M2.48 4.88 L3.96 6.26 L6.72 3.31" fill="none" stroke="#fff" stroke-width="0.9"/></svg>
<span id="t72" style="top:153.00px;left:634.6px;">Fein</span>
<svg style="left:678px;top:154.70000000000002px;" width="9.2" height="9.2" viewBox="0 0 9.2 9.2"><rect x="0.5" y="0.5" width="8.2" height="8.2" rx="1.6" fill="#fff" stroke="#5a5a5a" stroke-width="0.9"/></svg>
<span id="t73" style="top:153.00px;left:689.2px;letter-spacing:0.095px;">Altbau</span>
<svg style="left:726.2px;top:154.70000000000002px;" width="9.2" height="9.2" viewBox="0 0 9.2 9.2"><rect x="0.5" y="0.5" width="8.2" height="8.2" rx="1.6" fill="#fff" stroke="#5a5a5a" stroke-width="0.9"/></svg>
<span id="t74" style="top:153.00px;left:737px;letter-spacing:-0.139px;">Neubau</span>
<svg style="left:774.2px;top:154.70000000000002px;" width="9.2" height="9.2" viewBox="0 0 9.2 9.2"><rect x="0" y="0" width="9.2" height="9.2" rx="1.8" fill="#0b60c4"/><path d="M2.48 4.88 L3.96 6.26 L6.72 3.31" fill="none" stroke="#fff" stroke-width="0.9"/></svg>
<span id="t75" style="top:153.00px;left:785px;letter-spacing:-0.039px;">Ökobau</span>
<svg style="left:838px;top:154.60000000000002px;" width="9.4" height="9.4" viewBox="0 0 9.4 9.4"><circle cx="4.7" cy="4.7" r="4.2" fill="#fff" stroke="#5a5a5a" stroke-width="0.9"/></svg>
<span id="t76" style="top:153.00px;left:849.2px;letter-spacing:-0.103px;">Horizontal</span>
<svg style="left:893px;top:154.60000000000002px;" width="9.4" height="9.4" viewBox="0 0 9.4 9.4"><circle cx="4.7" cy="4.7" r="4.7" fill="#0b60c4"/><circle cx="4.7" cy="4.7" r="2.1" fill="#fff"/></svg>
<span id="t77" style="top:153.00px;left:904px;letter-spacing:0.023px;">Vertikal</span>
<div style="left:955.5px;top:153.2px;width:115px;height:14.4px;background:#fff;border-radius:2px;border-bottom:1px solid #8a8a8a;box-sizing:border-box;"></div>
<svg style="left:1056px;top:154.8px;" width="11" height="11" viewBox="0 0 11 11"><circle cx="6.6" cy="4.3" r="3.4" fill="none" stroke="#222" stroke-width="1.3"/><path d="M4.2 6.8 L0.8 10.2" stroke="#222" stroke-width="1.6"/></svg>
<div style="left:1072px;top:153.2px;width:8.4px;height:14.4px;background:#fff;"></div>
<svg style="left:1073.6px;top:154.8px;" width="5.4" height="10.6" viewBox="0 0 5.4 10.6"><path d="M0.1 3.2 L2.7 0.2 L5.3 3.2 Z M0.1 7.4 L2.7 10.4 L5.3 7.4 Z" fill="#222"/></svg>
<div style="left:1072px;top:159.8px;width:8.4px;height:0.8px;background:#ececec;"></div>
<div style="left:1083.9px;top:152.7px;width:14.2px;height:14.7px;background:#fdfdfd;border:1px solid #dadada;border-radius:2.5px;box-sizing:border-box;"></div>
<svg style="left:1086.8px;top:155px;" width="8.4" height="8.6" viewBox="0 0 8.4 8.6"><path d="M0.4 0.4 L8 8.2 M8 0.4 L0.4 8.2" stroke="#1f62b4" stroke-width="1.2"/></svg>
<div style="left:336.4px;top:171.4px;width:766px;height:248.6px;background:#f8f8f8;"></div>
<div style="left:339.6px;top:175px;width:762.4px;height:245px;background:#fff;"></div>
<div style="left:338.6px;top:175.8px;width:763.4px;height:244.2px;overflow:hidden;">
<div style="left:1.4px;top:14.0px;width:747.4000000000001px;height:1px;background:#f5f5f5;"></div>
<div style="left:1.4px;top:27.67px;width:747.4000000000001px;height:1px;background:#f5f5f5;"></div>
<div style="left:1.4px;top:41.34px;width:747.4000000000001px;height:1px;background:#f5f5f5;"></div>
<div style="left:1.4px;top:55.01px;width:747.4000000000001px;height:1px;background:#f5f5f5;"></div>
<div style="left:1.4px;top:68.68px;width:747.4000000000001px;height:1px;background:#f5f5f5;"></div>
<div style="left:1.4px;top:82.35px;width:747.4000000000001px;height:1px;background:#f5f5f5;"></div>
<div style="left:1.4px;top:96.02px;width:747.4000000000001px;height:1px;background:#f5f5f5;"></div>
<div style="left:1.4px;top:109.69px;width:747.4000000000001px;height:1px;background:#f5f5f5;"></div>
<div style="left:1.4px;top:123.36px;width:747.4000000000001px;height:1px;background:#f5f5f5;"></div>
<div style="left:1.4px;top:137.03px;width:747.4000000000001px;height:1px;background:#f5f5f5;"></div>
<div style="left:1.4px;top:150.7px;width:747.4000000000001px;height:1px;background:#f5f5f5;"></div>
<div style="left:1.4px;top:164.37px;width:747.4000000000001px;height:1px;background:#f5f5f5;"></div>
<div style="left:1.4px;top:178.04px;width:747.4000000000001px;height:1px;background:#f5f5f5;"></div>
<div style="left:1.4px;top:191.71px;width:747.4000000000001px;height:1px;background:#f5f5f5;"></div>
<div style="left:1.4px;top:205.38px;width:747.4000000000001px;height:1px;background:#f5f5f5;"></div>
<div style="left:1.4px;top:219.05px;width:747.4000000000001px;height:1px;background:#f5f5f5;"></div>
<div style="left:1.4px;top:232.72px;width:747.4000000000001px;height:1px;background:#f5f5f5;"></div>
<div style="left:1.4px;top:246.39px;width:747.4000000000001px;height:1px;background:#f5f5f5;"></div>
<div style="left:110.1px;top:0px;width:1px;height:244.2px;background:#f2f2f2;"></div>
<div style="left:110.1px;top:0.6px;width:1px;height:13.4px;background:#e9e9e9;"></div>
<div style="left:293.4px;top:0px;width:1px;height:244.2px;background:#f2f2f2;"></div>
<div style="left:293.4px;top:0.6px;width:1px;height:13.4px;background:#e9e9e9;"></div>
<div style="left:337.9px;top:0px;width:1px;height:244.2px;background:#f2f2f2;"></div>
<div style="left:337.9px;top:0.6px;width:1px;height:13.4px;background:#e9e9e9;"></div>
<div style="left:388.9px;top:0px;width:1px;height:244.2px;background:#f2f2f2;"></div>
<div style="left:388.9px;top:0.6px;width:1px;height:13.4px;background:#e9e9e9;"></div>
<div style="left:432.7px;top:0px;width:1px;height:244.2px;background:#f2f2f2;"></div>
<div style="left:432.7px;top:0.6px;width:1px;height:13.4px;background:#e9e9e9;"></div>
<div style="left:488.7px;top:0px;width:1px;height:244.2px;background:#f2f2f2;"></div>
<div style="left:488.7px;top:0.6px;width:1px;height:13.4px;background:#e9e9e9;"></div>
<div style="left:528.7px;top:0px;width:1px;height:244.2px;background:#f2f2f2;"></div>
<div style="left:528.7px;top:0.6px;width:1px;height:13.4px;background:#e9e9e9;"></div>
<div style="left:568.5px;top:0px;width:1px;height:244.2px;background:#f2f2f2;"></div>
<div style="left:568.5px;top:0.6px;width:1px;height:13.4px;background:#e9e9e9;"></div>
<div style="left:609.5px;top:0px;width:1px;height:244.2px;background:#f2f2f2;"></div>
<div style="left:609.5px;top:0.6px;width:1px;height:13.4px;background:#e9e9e9;"></div>
<div style="left:692.2px;top:0px;width:1px;height:244.2px;background:#f2f2f2;"></div>
<div style="left:692.2px;top:0.6px;width:1px;height:13.4px;background:#e9e9e9;"></div>
<div style="left:747.9px;top:0px;width:1px;height:244.2px;background:#f2f2f2;"></div>
<div style="left:747.9px;top:0.6px;width:1px;height:13.4px;background:#e9e9e9;"></div>
</div>
<span id="t78" style="top:177.00px;left:343.8px;letter-spacing:0.284px;">KG.AK.AA</span>
<svg style="left:392.6px;top:181.4px;" width="5.6" height="3.6" viewBox="0 0 5.6 3.6"><path d="M0.4 3.2 L2.8 0.6 L5.2 3.2" fill="none" stroke="#666" stroke-width="0.8"/></svg>
<span id="t79" style="top:177.00px;left:454px;">Text</span>
<span id="t80" style="top:177.00px;right:429.00px;">Von</span>
<span id="t81" style="top:177.00px;right:377.87px;letter-spacing:0.131px;">Mittel</span>
<span id="t82" style="top:177.00px;right:334.40px;">Bis</span>
<span id="t83" style="top:177.00px;left:775.6px;letter-spacing:-0.004px;">Einheit</span>
<span id="t84" style="top:177.00px;right:238.00px;">LB</span>
<span id="t85" style="top:177.00px;right:198.00px;">LS</span>
<span id="t86" style="top:177.00px;right:158.00px;">DH</span>
<span id="t87" style="top:177.00px;left:953.6px;letter-spacing:-0.119px;">Quelle</span>
<span id="t88" style="top:177.00px;right:18.91px;letter-spacing:0.095px;">Anzahl</span>
<div style="left:339.9px;top:190.1px;width:108.7px;height:12.8px;background:#cce7fc;border:1.2px solid #1180dc;border-radius:2px;box-sizing:border-box;"></div>
<div style="left:449.5px;top:190.1px;width:182.4px;height:12.8px;background:#cce7fc;border:1.2px solid #1180dc;border-radius:2px;box-sizing:border-box;"></div>
<div style="left:632.8px;top:190.1px;width:43.6px;height:12.8px;background:#cce7fc;border:1.2px solid #1180dc;border-radius:2px;box-sizing:border-box;"></div>
<div style="left:677.3px;top:190.1px;width:50.1px;height:12.8px;background:#cce7fc;border:1.2px solid #1180dc;border-radius:2px;box-sizing:border-box;"></div>
<div style="left:728.3px;top:190.1px;width:42.9px;height:12.8px;background:#cce7fc;border:1.2px solid #1180dc;border-radius:2px;box-sizing:border-box;"></div>
<div style="left:772.1px;top:190.1px;width:55.1px;height:12.8px;background:#cce7fc;border:1.2px solid #1180dc;border-radius:2px;box-sizing:border-box;"></div>
<div style="left:828.1px;top:190.1px;width:39.1px;height:12.8px;background:#cce7fc;border:1.2px solid #1180dc;border-radius:2px;box-sizing:border-box;"></div>
<div style="left:868.1px;top:190.1px;width:38.9px;height:12.8px;background:#cce7fc;border:1.2px solid #1180dc;border-radius:2px;box-sizing:border-box;"></div>
<div style="left:907.9px;top:190.1px;width:40.1px;height:12.8px;background:#cce7fc;border:1.2px solid #1180dc;border-radius:2px;box-sizing:border-box;"></div>
<div style="left:948.9px;top:190.1px;width:81.8px;height:12.8px;background:#cce7fc;border:1.2px solid #1180dc;border-radius:2px;box-sizing:border-box;"></div>
<div style="left:1031.6px;top:190.1px;width:54.8px;height:12.8px;background:#cce7fc;border:1.2px solid #1180dc;border-radius:2px;box-sizing:border-box;"></div>
<svg style="left:346.8px;top:195.035px;" width="6" height="4" viewBox="0 0 6 4"><path d="M0.5 0.5 L3 3 L5.5 0.5" fill="none" stroke="#2e2e2e" stroke-width="1.35"/></svg>
<svg style="left:356.1px;top:191.535px;" width="9.8" height="10.2" viewBox="0 0 9.8 10.2"><g fill="#0b4f9e"><ellipse cx="4.9" cy="1.7" rx="4.8" ry="1.7"/><path d="M0.1 2.35 Q4.9 4.75 9.7 2.35 V3.75 Q4.9 6.25 0.1 3.75 Z"/><path d="M0.1 4.75 Q4.9 7.15 9.7 4.75 V6.15 Q4.9 8.65 0.1 6.15 Z"/><path d="M0.1 7.15 Q4.9 9.55 9.7 7.15 V8.55 Q4.9 11.05 0.1 8.55 Z"/></g></svg>
<span id="t89" style="top:191.00px;left:455.6px;font-weight:bold;letter-spacing:0.055px;">Alle Kostengruppen der Zieldatenbank</span>
<span id="t90" style="top:191.00px;right:18.45px;font-weight:bold;letter-spacing:0.154px;">1.936</span>
<svg style="left:360.6px;top:207.505px;" width="4" height="6.4" viewBox="0 0 4 6.4"><path d="M0.5 0.4 L3.1 3.2 L0.5 6" fill="none" stroke="#7a7a7a" stroke-width="1.05"/></svg>
<svg style="left:368.8px;top:205.805px;" width="9.6" height="9.4" viewBox="0 0 9.6 9.4"><rect x="0" y="0" width="9.6" height="9.4" rx="2" fill="#0c56a6"/></svg>
<span id="t91" style="top:205.00px;left:273.6px;width:200px;text-align:center;font-size:6px;font-weight:bold;color:#fff;letter-spacing:-0.5px;">KG</span>
<span id="t92" style="top:205.00px;left:383.6px;font-weight:bold;">100</span>
<span id="t93" style="top:205.00px;left:455.6px;font-weight:bold;letter-spacing:-0.202px;">Grundstück</span>
<span id="t94" style="top:205.00px;right:18.60px;font-weight:bold;">15</span>
<svg style="left:359.6px;top:222.375px;" width="6" height="4" viewBox="0 0 6 4"><path d="M0.5 0.5 L3 3 L5.5 0.5" fill="none" stroke="#2e2e2e" stroke-width="1.35"/></svg>
<svg style="left:368.8px;top:219.47500000000002px;" width="9.6" height="9.4" viewBox="0 0 9.6 9.4"><rect x="0" y="0" width="9.6" height="9.4" rx="2" fill="#0c56a6"/></svg>
<span id="t95" style="top:218.00px;left:273.6px;width:200px;text-align:center;font-size:6px;font-weight:bold;color:#fff;letter-spacing:-0.5px;">KG</span>
<span id="t96" style="top:218.00px;left:383.6px;font-weight:bold;">200</span>
<span id="t97" style="top:218.00px;left:455.6px;font-weight:bold;letter-spacing:0.158px;">Vorbereitende Maßnahmen</span>
<span id="t98" style="top:218.00px;right:18.60px;font-weight:bold;">25</span>
<svg style="left:371.8px;top:236.045px;" width="6" height="4" viewBox="0 0 6 4"><path d="M0.5 0.5 L3 3 L5.5 0.5" fill="none" stroke="#2e2e2e" stroke-width="1.35"/></svg>
<svg style="left:381.0px;top:233.145px;" width="9.6" height="9.4" viewBox="0 0 9.6 9.4"><rect x="0" y="0" width="9.6" height="9.4" rx="2" fill="#0c56a6"/></svg>
<span id="t99" style="top:232.00px;left:285.8px;width:200px;text-align:center;font-size:6px;font-weight:bold;color:#fff;letter-spacing:-0.5px;">KG</span>
<span id="t100" style="top:232.00px;left:395.8px;font-weight:bold;">210</span>
<span id="t101" style="top:232.00px;left:455.6px;font-weight:bold;letter-spacing:0.008px;">Herrichten</span>
<span id="t102" style="top:232.00px;right:18.60px;font-weight:bold;">10</span>
<svg style="left:384px;top:249.715px;" width="6" height="4" viewBox="0 0 6 4"><path d="M0.5 0.5 L3 3 L5.5 0.5" fill="none" stroke="#2e2e2e" stroke-width="1.35"/></svg>
<svg style="left:394px;top:247.115px;" width="8.8" height="8.8" viewBox="0 0 8.8 8.8"><rect x="0" y="0" width="8.8" height="8.8" rx="1.8" fill="#0b60c4"/><path d="M2.38 4.66 L3.78 5.98 L6.42 3.17" fill="none" stroke="#fff" stroke-width="0.9"/></svg>
<svg style="left:405.2px;top:246.81500000000003px;" width="9.6" height="9.4" viewBox="0 0 9.6 9.4"><rect x="0" y="0" width="9.6" height="9.4" rx="2" fill="#0c56a6"/></svg>
<span id="t103" style="top:246.00px;left:310.0px;width:200px;text-align:center;font-size:6px;font-weight:bold;color:#fff;letter-spacing:-0.5px;">AK</span>
<span id="t104" style="top:246.00px;left:419.6px;">01</span>
<span id="t105" style="top:246.00px;left:455.8px;letter-spacing:-0.097px;">Einfriedungen, Hindernisse abräumen</span>
<span id="t106" style="top:246.00px;left:955.4px;letter-spacing:-0.129px;">BTK-Ökobau-Grob</span>
<span id="t107" style="top:246.00px;right:18.60px;">10</span>
<svg style="left:406.4px;top:260.78499999999997px;" width="8.8" height="8.8" viewBox="0 0 8.8 8.8"><rect x="0" y="0" width="8.8" height="8.8" rx="1.8" fill="#0b60c4"/><path d="M2.38 4.66 L3.78 5.98 L6.42 3.17" fill="none" stroke="#fff" stroke-width="0.9"/></svg>
<svg style="left:417.2px;top:260.48499999999996px;" width="9.6" height="9.4" viewBox="0 0 9.6 9.4"><rect x="0" y="0" width="9.6" height="9.4" rx="2" fill="#0c56a6"/></svg>
<span id="t108" style="top:259.00px;left:322.0px;width:200px;text-align:center;font-size:6px;font-weight:bold;color:#fff;letter-spacing:-0.5px;">AA</span>
<span id="t109" style="top:259.00px;left:432px;">001</span>
<span id="t110" style="top:259.00px;left:455.8px;letter-spacing:-0.079px;">Bauwerke, Bauwerksteile abbrechen</span>
<span id="t111" style="top:259.00px;right:428.00px;">409,38</span>
<span id="t112" style="top:259.00px;right:377.00px;">586,28</span>
<span id="t113" style="top:259.00px;right:333.40px;">929,95</span>
<span id="t114" style="top:259.00px;left:778.2px;">m3</span>
<span id="t115" style="top:259.00px;right:237.40px;">920</span>
<span id="t116" style="top:259.00px;right:197.60px;">4</span>
<span id="t117" style="top:259.00px;left:955.4px;letter-spacing:-0.129px;">BTK-Ökobau-Grob</span>
<svg style="left:406.4px;top:274.455px;" width="8.8" height="8.8" viewBox="0 0 8.8 8.8"><rect x="0" y="0" width="8.8" height="8.8" rx="1.8" fill="#0b60c4"/><path d="M2.38 4.66 L3.78 5.98 L6.42 3.17" fill="none" stroke="#fff" stroke-width="0.9"/></svg>
<svg style="left:417.2px;top:274.155px;" width="9.6" height="9.4" viewBox="0 0 9.6 9.4"><rect x="0" y="0" width="9.6" height="9.4" rx="2" fill="#0c56a6"/></svg>
<span id="t118" style="top:273.00px;left:322.0px;width:200px;text-align:center;font-size:6px;font-weight:bold;color:#fff;letter-spacing:-0.5px;">AA</span>
<span id="t119" style="top:273.00px;left:432px;">002</span>
<span id="t120" style="top:273.00px;left:455.8px;letter-spacing:-0.089px;">Zäune, Gitter mit Fundamenten abräumen</span>
<span id="t121" style="top:273.00px;right:428.00px;">166,79</span>
<span id="t122" style="top:273.00px;right:377.00px;">212,27</span>
<span id="t123" style="top:273.00px;right:333.40px;">252,70</span>
<span id="t124" style="top:273.00px;left:778.2px;">m3</span>
<span id="t125" style="top:273.00px;right:237.40px;">920</span>
<span id="t126" style="top:273.00px;right:197.60px;">4</span>
<span id="t127" style="top:273.00px;left:955.4px;letter-spacing:-0.129px;">BTK-Ökobau-Grob</span>
<svg style="left:406.4px;top:288.125px;" width="8.8" height="8.8" viewBox="0 0 8.8 8.8"><rect x="0" y="0" width="8.8" height="8.8" rx="1.8" fill="#0b60c4"/><path d="M2.38 4.66 L3.78 5.98 L6.42 3.17" fill="none" stroke="#fff" stroke-width="0.9"/></svg>
<svg style="left:417.2px;top:287.825px;" width="9.6" height="9.4" viewBox="0 0 9.6 9.4"><rect x="0" y="0" width="9.6" height="9.4" rx="2" fill="#0c56a6"/></svg>
<span id="t128" style="top:287.00px;left:322.0px;width:200px;text-align:center;font-size:6px;font-weight:bold;color:#fff;letter-spacing:-0.5px;">AA</span>
<span id="t129" style="top:287.00px;left:432px;">003</span>
<span id="t130" style="top:287.00px;left:455.8px;letter-spacing:-0.112px;">Betonteile, Trennmauern abbrechen</span>
<span id="t131" style="top:287.00px;right:428.00px;">318,41</span>
<span id="t132" style="top:287.00px;right:377.00px;">389,17</span>
<span id="t133" style="top:287.00px;right:333.40px;">470,03</span>
<span id="t134" style="top:287.00px;left:778.2px;">m3</span>
<span id="t135" style="top:287.00px;right:237.40px;">920</span>
<span id="t136" style="top:287.00px;right:197.60px;">4</span>
<span id="t137" style="top:287.00px;left:955.4px;letter-spacing:-0.129px;">BTK-Ökobau-Grob</span>
<svg style="left:406.4px;top:301.795px;" width="8.8" height="8.8" viewBox="0 0 8.8 8.8"><rect x="0" y="0" width="8.8" height="8.8" rx="1.8" fill="#0b60c4"/><path d="M2.38 4.66 L3.78 5.98 L6.42 3.17" fill="none" stroke="#fff" stroke-width="0.9"/></svg>
<svg style="left:417.2px;top:301.495px;" width="9.6" height="9.4" viewBox="0 0 9.6 9.4"><rect x="0" y="0" width="9.6" height="9.4" rx="2" fill="#0c56a6"/></svg>
<span id="t138" style="top:300.00px;left:322.0px;width:200px;text-align:center;font-size:6px;font-weight:bold;color:#fff;letter-spacing:-0.5px;">AA</span>
<span id="t139" style="top:300.00px;left:432px;">005</span>
<span id="t140" style="top:300.00px;left:455.8px;letter-spacing:-0.141px;">Verkehrsanlagen abräumen</span>
<span id="t141" style="top:300.00px;right:428.00px;">187,00</span>
<span id="t142" style="top:300.00px;right:377.00px;">227,43</span>
<span id="t143" style="top:300.00px;right:333.40px;">272,92</span>
<span id="t144" style="top:300.00px;left:778.2px;">m3</span>
<span id="t145" style="top:300.00px;right:237.40px;">920</span>
<span id="t146" style="top:300.00px;right:197.60px;">4</span>
<span id="t147" style="top:300.00px;left:955.4px;letter-spacing:-0.129px;">BTK-Ökobau-Grob</span>
<svg style="left:406.4px;top:315.46500000000003px;" width="8.8" height="8.8" viewBox="0 0 8.8 8.8"><rect x="0" y="0" width="8.8" height="8.8" rx="1.8" fill="#0b60c4"/><path d="M2.38 4.66 L3.78 5.98 L6.42 3.17" fill="none" stroke="#fff" stroke-width="0.9"/></svg>
<svg style="left:417.2px;top:315.165px;" width="9.6" height="9.4" viewBox="0 0 9.6 9.4"><rect x="0" y="0" width="9.6" height="9.4" rx="2" fill="#0c56a6"/></svg>
<span id="t148" style="top:314.00px;left:322.0px;width:200px;text-align:center;font-size:6px;font-weight:bold;color:#fff;letter-spacing:-0.5px;">AA</span>
<span id="t149" style="top:314.00px;left:432px;">006</span>
<span id="t150" style="top:314.00px;left:455.8px;letter-spacing:-0.074px;">Gebüsch, Hecken roden</span>
<span id="t151" style="top:314.00px;right:428.00px;">12,13</span>
<span id="t152" style="top:314.00px;right:377.00px;">27,29</span>
<span id="t153" style="top:314.00px;right:333.40px;">46,50</span>
<span id="t154" style="top:314.00px;left:778.2px;">m3</span>
<span id="t155" style="top:314.00px;right:237.40px;">920</span>
<span id="t156" style="top:314.00px;right:197.60px;">4</span>
<span id="t157" style="top:314.00px;left:955.4px;letter-spacing:-0.129px;">BTK-Ökobau-Grob</span>
<svg style="left:406.4px;top:329.135px;" width="8.8" height="8.8" viewBox="0 0 8.8 8.8"><rect x="0" y="0" width="8.8" height="8.8" rx="1.8" fill="#0b60c4"/><path d="M2.38 4.66 L3.78 5.98 L6.42 3.17" fill="none" stroke="#fff" stroke-width="0.9"/></svg>
<svg style="left:417.2px;top:328.835px;" width="9.6" height="9.4" viewBox="0 0 9.6 9.4"><rect x="0" y="0" width="9.6" height="9.4" rx="2" fill="#0c56a6"/></svg>
<span id="t158" style="top:328.00px;left:322.0px;width:200px;text-align:center;font-size:6px;font-weight:bold;color:#fff;letter-spacing:-0.5px;">AA</span>
<span id="t159" style="top:328.00px;left:432px;">007</span>
<span id="t160" style="top:328.00px;left:455.8px;letter-spacing:-0.103px;">Bäume, Baumgruppen fällen</span>
<span id="t161" style="top:328.00px;right:428.00px;">49,53</span>
<span id="t162" style="top:328.00px;right:377.00px;">58,63</span>
<span id="t163" style="top:328.00px;right:333.40px;">72,78</span>
<span id="t164" style="top:328.00px;left:778.2px;">m3</span>
<span id="t165" style="top:328.00px;right:237.40px;">920</span>
<span id="t166" style="top:328.00px;right:197.60px;">4</span>
<span id="t167" style="top:328.00px;left:955.4px;letter-spacing:-0.129px;">BTK-Ökobau-Grob</span>
<svg style="left:406.4px;top:342.805px;" width="8.8" height="8.8" viewBox="0 0 8.8 8.8"><rect x="0" y="0" width="8.8" height="8.8" rx="1.8" fill="#0b60c4"/><path d="M2.38 4.66 L3.78 5.98 L6.42 3.17" fill="none" stroke="#fff" stroke-width="0.9"/></svg>
<svg style="left:417.2px;top:342.505px;" width="9.6" height="9.4" viewBox="0 0 9.6 9.4"><rect x="0" y="0" width="9.6" height="9.4" rx="2" fill="#0c56a6"/></svg>
<span id="t168" style="top:341.00px;left:322.0px;width:200px;text-align:center;font-size:6px;font-weight:bold;color:#fff;letter-spacing:-0.5px;">AA</span>
<span id="t169" style="top:341.00px;left:432px;">011</span>
<span id="t170" style="top:341.00px;left:455.8px;letter-spacing:-0.027px;">plus Kippgebühr Bauschutt</span>
<span id="t171" style="top:341.00px;right:428.00px;">22,24</span>
<span id="t172" style="top:341.00px;right:377.00px;">60,65</span>
<span id="t173" style="top:341.00px;right:333.40px;">126,35</span>
<span id="t174" style="top:341.00px;left:778.2px;">m3</span>
<span id="t175" style="top:341.00px;right:237.40px;">920</span>
<span id="t176" style="top:341.00px;right:197.60px;">2</span>
<span id="t177" style="top:341.00px;left:955.4px;letter-spacing:-0.129px;">BTK-Ökobau-Grob</span>
<svg style="left:406.4px;top:356.475px;" width="8.8" height="8.8" viewBox="0 0 8.8 8.8"><rect x="0" y="0" width="8.8" height="8.8" rx="1.8" fill="#0b60c4"/><path d="M2.38 4.66 L3.78 5.98 L6.42 3.17" fill="none" stroke="#fff" stroke-width="0.9"/></svg>
<svg style="left:417.2px;top:356.175px;" width="9.6" height="9.4" viewBox="0 0 9.6 9.4"><rect x="0" y="0" width="9.6" height="9.4" rx="2" fill="#0c56a6"/></svg>
<span id="t178" style="top:355.00px;left:322.0px;width:200px;text-align:center;font-size:6px;font-weight:bold;color:#fff;letter-spacing:-0.5px;">AA</span>
<span id="t179" style="top:355.00px;left:432px;">012</span>
<span id="t180" style="top:355.00px;left:455.8px;letter-spacing:-0.068px;">plus Kippgebühr Gemisch</span>
<span id="t181" style="top:355.00px;right:428.00px;">116,24</span>
<span id="t182" style="top:355.00px;right:377.00px;">323,46</span>
<span id="t183" style="top:355.00px;right:333.40px;">707,57</span>
<span id="t184" style="top:355.00px;left:778.2px;">m3</span>
<span id="t185" style="top:355.00px;right:237.40px;">920</span>
<span id="t186" style="top:355.00px;right:197.60px;">2</span>
<span id="t187" style="top:355.00px;left:955.4px;letter-spacing:-0.129px;">BTK-Ökobau-Grob</span>
<svg style="left:406.4px;top:370.145px;" width="8.8" height="8.8" viewBox="0 0 8.8 8.8"><rect x="0" y="0" width="8.8" height="8.8" rx="1.8" fill="#0b60c4"/><path d="M2.38 4.66 L3.78 5.98 L6.42 3.17" fill="none" stroke="#fff" stroke-width="0.9"/></svg>
<svg style="left:417.2px;top:369.84499999999997px;" width="9.6" height="9.4" viewBox="0 0 9.6 9.4"><rect x="0" y="0" width="9.6" height="9.4" rx="2" fill="#0c56a6"/></svg>
<span id="t188" style="top:369.00px;left:322.0px;width:200px;text-align:center;font-size:6px;font-weight:bold;color:#fff;letter-spacing:-0.5px;">AA</span>
<span id="t189" style="top:369.00px;left:432px;">013</span>
<span id="t190" style="top:369.00px;left:455.8px;letter-spacing:-0.091px;">plus Kippgebühr Sondermüll</span>
<span id="t191" style="top:369.00px;right:428.00px;">707,57</span>
<span id="t192" style="top:369.00px;right:377.00px;">1.819,47</span>
<span id="t193" style="top:369.00px;right:333.40px;">3.891,65</span>
<span id="t194" style="top:369.00px;left:778.2px;">m3</span>
<span id="t195" style="top:369.00px;right:237.40px;">920</span>
<span id="t196" style="top:369.00px;right:197.60px;">2</span>
<span id="t197" style="top:369.00px;left:955.4px;letter-spacing:-0.129px;">BTK-Ökobau-Grob</span>
<svg style="left:406.4px;top:383.815px;" width="8.8" height="8.8" viewBox="0 0 8.8 8.8"><rect x="0" y="0" width="8.8" height="8.8" rx="1.8" fill="#0b60c4"/><path d="M2.38 4.66 L3.78 5.98 L6.42 3.17" fill="none" stroke="#fff" stroke-width="0.9"/></svg>
<svg style="left:417.2px;top:383.515px;" width="9.6" height="9.4" viewBox="0 0 9.6 9.4"><rect x="0" y="0" width="9.6" height="9.4" rx="2" fill="#0c56a6"/></svg>
<span id="t198" style="top:382.00px;left:322.0px;width:200px;text-align:center;font-size:6px;font-weight:bold;color:#fff;letter-spacing:-0.5px;">AA</span>
<span id="t199" style="top:382.00px;left:432px;">014</span>
<span id="t200" style="top:382.00px;left:455.8px;letter-spacing:-0.067px;">plus Gebühr Kompostierung</span>
<span id="t201" style="top:382.00px;right:428.00px;">9,10</span>
<span id="t202" style="top:382.00px;right:377.00px;">48,52</span>
<span id="t203" style="top:382.00px;right:333.40px;">88,95</span>
<span id="t204" style="top:382.00px;left:778.2px;">m3</span>
<span id="t205" style="top:382.00px;right:237.40px;">920</span>
<span id="t206" style="top:382.00px;right:197.60px;">2</span>
<span id="t207" style="top:382.00px;left:955.4px;letter-spacing:-0.129px;">BTK-Ökobau-Grob</span>
<svg style="left:372.8px;top:398.885px;" width="4" height="6.4" viewBox="0 0 4 6.4"><path d="M0.5 0.4 L3.1 3.2 L0.5 6" fill="none" stroke="#7a7a7a" stroke-width="1.05"/></svg>
<svg style="left:381.0px;top:397.185px;" width="9.6" height="9.4" viewBox="0 0 9.6 9.4"><rect x="0" y="0" width="9.6" height="9.4" rx="2" fill="#0c56a6"/></svg>
<span id="t208" style="top:396.00px;left:285.8px;width:200px;text-align:center;font-size:6px;font-weight:bold;color:#fff;letter-spacing:-0.5px;">KG</span>
<span id="t209" style="top:396.00px;left:395.8px;font-weight:bold;">220</span>
<span id="t210" style="top:396.00px;left:455.6px;font-weight:bold;letter-spacing:-0.017px;">Öffentliche Erschließung</span>
<span id="t211" style="top:396.00px;right:18.60px;font-weight:bold;">9</span>
<div style="left:338.6px;top:175.8px;width:763.4px;height:244.2px;overflow:hidden;"><div style="left:-338.6px;top:-175.8px;width:1102px;height:743px;">
<svg style="left:372.8px;top:412.55499999999995px;" width="4" height="6.4" viewBox="0 0 4 6.4"><path d="M0.5 0.4 L3.1 3.2 L0.5 6" fill="none" stroke="#7a7a7a" stroke-width="1.05"/></svg>
<svg style="left:381.0px;top:410.85499999999996px;" width="9.6" height="9.4" viewBox="0 0 9.6 9.4"><rect x="0" y="0" width="9.6" height="9.4" rx="2" fill="#0c56a6"/></svg>
<span id="t212" style="top:410.00px;left:285.8px;width:200px;text-align:center;font-size:6px;font-weight:bold;color:#fff;letter-spacing:-0.5px;">KG</span>
<span id="t213" style="top:410.00px;left:395.8px;font-weight:bold;">240</span>
<span id="t214" style="top:410.00px;left:455.6px;font-weight:bold;letter-spacing:0.062px;">Ausgleichsmaßnahmen und -abgaben</span>
<span id="t215" style="top:410.00px;right:18.60px;font-weight:bold;">4</span>
</div></div>
<div style="left:338.4px;top:420px;width:763.6px;height:1px;background:#5f5f5f;"></div>
<div style="left:336.4px;top:420px;width:2px;height:1px;background:#c8c8c8;"></div>
<div style="left:336.5px;top:421px;width:766px;height:2.8px;background:#f4f4f4;"></div>
<div style="left:336.5px;top:423.7px;width:766px;height:1px;background:#c2c2c2;"></div>
<div style="left:336.5px;top:424.7px;width:766px;height:16px;background:#f5f5f5;"></div>
<span id="t216" style="top:428.00px;left:339.4px;font-weight:bold;letter-spacing:0.061px;">HINWEIS: Es werden nur Datenbanken angezeigt, die mit der Version der DIN 276 Ihrer Kostenermittlung übereinstimmen.</span>
<div style="left:336px;top:439.9px;width:766px;height:90.6px;background:#888;"></div>
<div style="left:337.8px;top:441.8px;width:766px;height:88.7px;background:#f2f2f2;"></div>
<div style="left:338.9px;top:443px;width:766px;height:86.6px;background:#c0c0c0;"></div>
<span id="t217" style="top:533.00px;left:339.2px;font-weight:bold;letter-spacing:0.087px;">Zu importierende Kostenelemente:</span>
<div style="left:339px;top:546.6px;width:763px;height:167.0px;background:#fff;border-top:1px solid #8e8e8e;border-left:1px solid #858585;border-bottom:1px solid #c8c8c8;box-sizing:border-box;"></div>
<div style="left:392.8px;top:547.6px;width:1px;height:165.0px;background:#f2f2f2;"></div>
<div style="left:392.8px;top:548.6px;width:1px;height:14px;background:#eaeaea;"></div>
<div style="left:567.7px;top:547.6px;width:1px;height:165.0px;background:#f2f2f2;"></div>
<div style="left:567.7px;top:548.6px;width:1px;height:14px;background:#eaeaea;"></div>
<div style="left:604.1px;top:547.6px;width:1px;height:165.0px;background:#f2f2f2;"></div>
<div style="left:604.1px;top:548.6px;width:1px;height:14px;background:#eaeaea;"></div>
<div style="left:647.3px;top:547.6px;width:1px;height:165.0px;background:#f2f2f2;"></div>
<div style="left:647.3px;top:548.6px;width:1px;height:14px;background:#eaeaea;"></div>
<div style="left:691.1px;top:547.6px;width:1px;height:165.0px;background:#f2f2f2;"></div>
<div style="left:691.1px;top:548.6px;width:1px;height:14px;background:#eaeaea;"></div>
<div style="left:728.4px;top:547.6px;width:1px;height:165.0px;background:#f2f2f2;"></div>
<div style="left:728.4px;top:548.6px;width:1px;height:14px;background:#eaeaea;"></div>
<div style="left:752.5px;top:547.6px;width:1px;height:165.0px;background:#f2f2f2;"></div>
<div style="left:752.5px;top:548.6px;width:1px;height:14px;background:#eaeaea;"></div>
<div style="left:773.5px;top:547.6px;width:1px;height:165.0px;background:#f2f2f2;"></div>
<div style="left:773.5px;top:548.6px;width:1px;height:14px;background:#eaeaea;"></div>
<div style="left:795.2px;top:547.6px;width:1px;height:165.0px;background:#f2f2f2;"></div>
<div style="left:795.2px;top:548.6px;width:1px;height:14px;background:#eaeaea;"></div>
<div style="left:877.4px;top:547.6px;width:1px;height:165.0px;background:#f2f2f2;"></div>
<div style="left:877.4px;top:548.6px;width:1px;height:14px;background:#eaeaea;"></div>
<div style="left:343px;top:576.5px;width:759px;height:1px;background:#f5f5f5;"></div>
<div style="left:343px;top:590.23px;width:759px;height:1px;background:#f5f5f5;"></div>
<div style="left:343px;top:603.96px;width:759px;height:1px;background:#f5f5f5;"></div>
<div style="left:343px;top:617.69px;width:759px;height:1px;background:#f5f5f5;"></div>
<div style="left:343px;top:631.42px;width:759px;height:1px;background:#f5f5f5;"></div>
<div style="left:343px;top:645.15px;width:759px;height:1px;background:#f5f5f5;"></div>
<div style="left:343px;top:658.88px;width:759px;height:1px;background:#f5f5f5;"></div>
<div style="left:343px;top:672.61px;width:759px;height:1px;background:#f5f5f5;"></div>
<div style="left:343px;top:686.34px;width:759px;height:1px;background:#f5f5f5;"></div>
<div style="left:343px;top:700.07px;width:759px;height:1px;background:#f5f5f5;"></div>
<span id="t218" style="top:550.00px;left:344.8px;letter-spacing:0.234px;">KG.AK.AA</span>
<span id="t219" style="top:550.00px;left:397.6px;">Text</span>
<span id="t220" style="top:550.00px;right:501.40px;">Von</span>
<span id="t221" style="top:550.00px;right:458.00px;">Mittel</span>
<span id="t222" style="top:550.00px;right:414.60px;">Bis</span>
<span id="t223" style="top:550.00px;left:696.2px;letter-spacing:-0.004px;">Einheit</span>
<span id="t224" style="top:550.00px;right:353.60px;">LB</span>
<span id="t225" style="top:550.00px;right:332.40px;">LS</span>
<span id="t226" style="top:550.00px;left:779.4px;">DH</span>
<span id="t227" style="top:550.00px;left:799.6px;letter-spacing:-0.119px;">Quelle</span>
<span id="t228" style="top:566.00px;left:344.8px;letter-spacing:-0.155px;">210.01.001</span>
<span id="t229" style="top:566.00px;left:397.8px;letter-spacing:-0.079px;">Bauwerke, Bauwerksteile abbrechen</span>
<span id="t230" style="top:566.00px;right:501.20px;">409,38</span>
<span id="t231" style="top:566.00px;right:458.00px;">586,28</span>
<span id="t232" style="top:566.00px;right:414.40px;">929,95</span>
<span id="t233" style="top:566.00px;left:696.4px;">m3</span>
<span id="t234" style="top:566.00px;right:354.60px;">920</span>
<span id="t235" style="top:566.00px;right:334.60px;">4</span>
<span id="t236" style="top:566.00px;left:799.8px;letter-spacing:-0.129px;">BTK-Ökobau-Grob</span>
<span id="t237" style="top:579.00px;left:344.8px;letter-spacing:-0.155px;">210.01.002</span>
<span id="t238" style="top:579.00px;left:397.8px;letter-spacing:-0.089px;">Zäune, Gitter mit Fundamenten abräumen</span>
<span id="t239" style="top:579.00px;right:501.20px;">166,79</span>
<span id="t240" style="top:579.00px;right:458.00px;">212,27</span>
<span id="t241" style="top:579.00px;right:414.40px;">252,70</span>
<span id="t242" style="top:579.00px;left:696.4px;">m3</span>
<span id="t243" style="top:579.00px;right:354.60px;">920</span>
<span id="t244" style="top:579.00px;right:334.60px;">4</span>
<span id="t245" style="top:579.00px;left:799.8px;letter-spacing:-0.129px;">BTK-Ökobau-Grob</span>
<span id="t246" style="top:593.00px;left:344.8px;letter-spacing:-0.155px;">210.01.003</span>
<span id="t247" style="top:593.00px;left:397.8px;letter-spacing:-0.112px;">Betonteile, Trennmauern abbrechen</span>
<span id="t248" style="top:593.00px;right:501.20px;">318,41</span>
<span id="t249" style="top:593.00px;right:458.00px;">389,17</span>
<span id="t250" style="top:593.00px;right:414.40px;">470,03</span>
<span id="t251" style="top:593.00px;left:696.4px;">m3</span>
<span id="t252" style="top:593.00px;right:354.60px;">920</span>
<span id="t253" style="top:593.00px;right:334.60px;">4</span>
<span id="t254" style="top:593.00px;left:799.8px;letter-spacing:-0.129px;">BTK-Ökobau-Grob</span>
<span id="t255" style="top:607.00px;left:344.8px;letter-spacing:-0.155px;">210.01.005</span>
<span id="t256" style="top:607.00px;left:397.8px;letter-spacing:-0.141px;">Verkehrsanlagen abräumen</span>
<span id="t257" style="top:607.00px;right:501.20px;">187,00</span>
<span id="t258" style="top:607.00px;right:458.00px;">227,43</span>
<span id="t259" style="top:607.00px;right:414.40px;">272,92</span>
<span id="t260" style="top:607.00px;left:696.4px;">m3</span>
<span id="t261" style="top:607.00px;right:354.60px;">920</span>
<span id="t262" style="top:607.00px;right:334.60px;">4</span>
<span id="t263" style="top:607.00px;left:799.8px;letter-spacing:-0.129px;">BTK-Ökobau-Grob</span>
<span id="t264" style="top:621.00px;left:344.8px;letter-spacing:-0.155px;">210.01.006</span>
<span id="t265" style="top:621.00px;left:397.8px;letter-spacing:-0.074px;">Gebüsch, Hecken roden</span>
<span id="t266" style="top:621.00px;right:501.20px;">12,13</span>
<span id="t267" style="top:621.00px;right:458.00px;">27,29</span>
<span id="t268" style="top:621.00px;right:414.40px;">46,50</span>
<span id="t269" style="top:621.00px;left:696.4px;">m3</span>
<span id="t270" style="top:621.00px;right:354.60px;">920</span>
<span id="t271" style="top:621.00px;right:334.60px;">4</span>
<span id="t272" style="top:621.00px;left:799.8px;letter-spacing:-0.129px;">BTK-Ökobau-Grob</span>
<span id="t273" style="top:634.00px;left:344.8px;letter-spacing:-0.155px;">210.01.007</span>
<span id="t274" style="top:634.00px;left:397.8px;letter-spacing:-0.103px;">Bäume, Baumgruppen fällen</span>
<span id="t275" style="top:634.00px;right:501.20px;">49,53</span>
<span id="t276" style="top:634.00px;right:458.00px;">58,63</span>
<span id="t277" style="top:634.00px;right:414.40px;">72,78</span>
<span id="t278" style="top:634.00px;left:696.4px;">m3</span>
<span id="t279" style="top:634.00px;right:354.60px;">920</span>
<span id="t280" style="top:634.00px;right:334.60px;">4</span>
<span id="t281" style="top:634.00px;left:799.8px;letter-spacing:-0.129px;">BTK-Ökobau-Grob</span>
<span id="t282" style="top:648.00px;left:344.8px;letter-spacing:-0.089px;">210.01.011</span>
<span id="t283" style="top:648.00px;left:397.8px;letter-spacing:-0.027px;">plus Kippgebühr Bauschutt</span>
<span id="t284" style="top:648.00px;right:501.20px;">22,24</span>
<span id="t285" style="top:648.00px;right:458.00px;">60,65</span>
<span id="t286" style="top:648.00px;right:414.40px;">126,35</span>
<span id="t287" style="top:648.00px;left:696.4px;">m3</span>
<span id="t288" style="top:648.00px;right:354.60px;">920</span>
<span id="t289" style="top:648.00px;right:334.60px;">2</span>
<span id="t290" style="top:648.00px;left:799.8px;letter-spacing:-0.129px;">BTK-Ökobau-Grob</span>
<span id="t291" style="top:662.00px;left:344.8px;letter-spacing:-0.155px;">210.01.012</span>
<span id="t292" style="top:662.00px;left:397.8px;letter-spacing:-0.068px;">plus Kippgebühr Gemisch</span>
<span id="t293" style="top:662.00px;right:501.20px;">116,24</span>
<span id="t294" style="top:662.00px;right:458.00px;">323,46</span>
<span id="t295" style="top:662.00px;right:414.40px;">707,57</span>
<span id="t296" style="top:662.00px;left:696.4px;">m3</span>
<span id="t297" style="top:662.00px;right:354.60px;">920</span>
<span id="t298" style="top:662.00px;right:334.60px;">2</span>
<span id="t299" style="top:662.00px;left:799.8px;letter-spacing:-0.129px;">BTK-Ökobau-Grob</span>
<span id="t300" style="top:675.00px;left:344.8px;letter-spacing:-0.155px;">210.01.013</span>
<span id="t301" style="top:675.00px;left:397.8px;letter-spacing:-0.091px;">plus Kippgebühr Sondermüll</span>
<span id="t302" style="top:675.00px;right:501.20px;">707,57</span>
<span id="t303" style="top:675.00px;right:458.00px;">1.819,47</span>
<span id="t304" style="top:675.00px;right:414.40px;">3.891,65</span>
<span id="t305" style="top:675.00px;left:696.4px;">m3</span>
<span id="t306" style="top:675.00px;right:354.60px;">920</span>
<span id="t307" style="top:675.00px;right:334.60px;">2</span>
<span id="t308" style="top:675.00px;left:799.8px;letter-spacing:-0.129px;">BTK-Ökobau-Grob</span>
<span id="t309" style="top:689.00px;left:344.8px;letter-spacing:-0.155px;">210.01.014</span>
<span id="t310" style="top:689.00px;left:397.8px;letter-spacing:-0.067px;">plus Gebühr Kompostierung</span>
<span id="t311" style="top:689.00px;right:501.20px;">9,10</span>
<span id="t312" style="top:689.00px;right:458.00px;">48,52</span>
<span id="t313" style="top:689.00px;right:414.40px;">88,95</span>
<span id="t314" style="top:689.00px;left:696.4px;">m3</span>
<span id="t315" style="top:689.00px;right:354.60px;">920</span>
<span id="t316" style="top:689.00px;right:334.60px;">2</span>
<span id="t317" style="top:689.00px;left:799.8px;letter-spacing:-0.129px;">BTK-Ökobau-Grob</span>
<div style="left:336.5px;top:714.4px;width:766px;height:1.6px;background:#f8f8f8;"></div>
<div style="left:336.5px;top:716px;width:766px;height:1px;background:#b4b4b4;"></div>
<div style="left:340.6px;top:720.4px;width:69.6px;height:19.2px;background:#fdfdfd;border:1px solid #dedede;border-bottom-color:#d0d0d0;border-radius:3.5px;box-sizing:border-box;"></div>
<div style="left:415.8px;top:720.4px;width:69.4px;height:19.2px;background:#fdfdfd;border:1px solid #dedede;border-bottom-color:#d0d0d0;border-radius:3.5px;box-sizing:border-box;"></div>
<div style="left:490.8px;top:720.4px;width:69.4px;height:19.2px;background:#fdfdfd;border:1px solid #dedede;border-bottom-color:#d0d0d0;border-radius:3.5px;box-sizing:border-box;"></div>
<svg style="left:344.4px;top:725.8px;" width="9.6" height="8" viewBox="0 0 9.6 8"><path d="M0.5 4.2 L3.4 7.2 L9.1 0.6" fill="none" stroke="#2a98ad" stroke-width="1.3"/></svg>
<span id="t318" style="top:725.00px;left:356.8px;letter-spacing:-0.133px;">Übernehmen</span>
<div style="left:357px;top:734.3px;width:6.2px;height:0.9px;background:#1a1a1a;"></div>
<svg style="left:428.8px;top:726px;" width="9" height="9" viewBox="0 0 9 9"><path d="M0.5 0.5 L8.5 8.5 M8.5 0.5 L0.5 8.5" stroke="#e2474a" stroke-width="1.25"/></svg>
<span id="t319" style="top:725.00px;left:441.4px;letter-spacing:-0.062px;">Abbruch</span>
<div style="left:441.4px;top:734.3px;width:6px;height:0.9px;background:#1a1a1a;"></div>
<svg style="left:497px;top:726px;" width="9" height="9" viewBox="0 0 9 9"><path d="M0.5 0.5 L8.5 8.5 M8.5 0.5 L0.5 8.5" stroke="#1f62b4" stroke-width="1.25"/></svg>
<span id="t320" style="top:725.00px;left:509.6px;letter-spacing:-0.036px;">Liste leeren</span>
</div></body></html>
